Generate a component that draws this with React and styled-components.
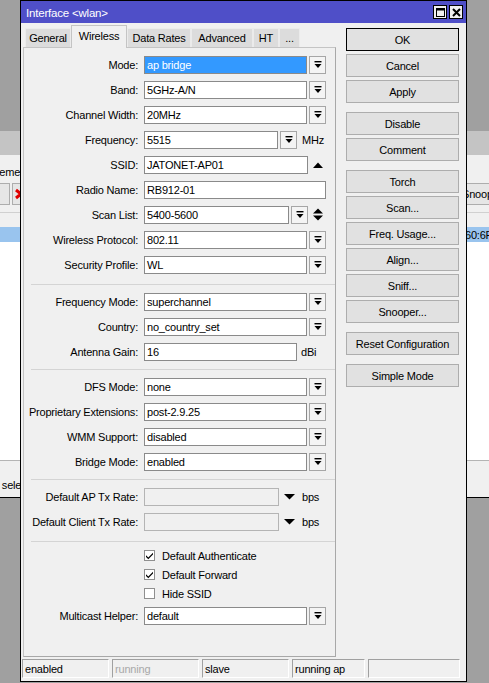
import React from "react";
import styled, { createGlobalStyle } from "styled-components";

const GlobalStyle = createGlobalStyle`
  html, body { margin: 0; padding: 0; }
  body {
    font-family: "Liberation Sans", Arial, sans-serif;
    font-size: 11px;
    letter-spacing: -0.2px;
    color: #000;
  }
`;

const Desktop = styled.div`
  position: relative;
  width: 489px;
  height: 683px;
  overflow: hidden;
  background: #a0a0a0;
`;

/* window lying behind the dialog */
const BackWindow = styled.div`
  position: absolute;
  left: -60px;
  top: 131px;
  width: 620px;
  height: 367px;
  box-sizing: border-box;
  background: #f0f0f0;
  border-bottom: 1px solid #000;
  display: flex;
  flex-direction: column;
`;

const BackTitle = styled.div`
  height: 24px;
  background: #c4c4c4;
`;

const BackTabs = styled.div`
  height: 26px;
  box-sizing: border-box;
  display: flex;
  align-items: flex-end;
  padding: 0 0 3px 40px;
`;

const BackToolbar = styled.div`
  height: 32px;
  box-sizing: border-box;
  display: flex;
  align-items: flex-start;
  gap: 2px;
  padding: 2px 0 0 50px;
  border-bottom: 1px solid #d0d0d0;
`;

const BackTool = styled.div`
  height: 22px;
  min-width: 20px;
  padding: 0 ${(p) => (p.$icon ? 1 : 3)}px;
  box-sizing: border-box;
  border: 1px solid #adadad;
  background: #e6e6e6;
  display: flex;
  align-items: center;
  margin-left: ${(p) => p.$push || 0}px;
`;

const BackHeader = styled.div`
  height: 14px;
  background: #f0f0f0;
`;

const BackList = styled.div`
  flex: 1;
  background: #fff;
`;

const BackRow = styled.div`
  height: 15px;
  display: flex;
  align-items: center;
  background: ${(p) => (p.$selected ? "#99c4ee" : "transparent")};
  padding-left: 525px;
`;

const BackStatus = styled.div`
  height: 37px;
  box-sizing: border-box;
  border-top: 1px solid #b4b4b4;
  display: flex;
  align-items: flex-end;
  padding: 0 0 6px 18px;
`;

/* dialog */
const Dialog = styled.div`
  position: absolute;
  left: 20px;
  top: 0;
  width: 447px;
  height: 682px;
  box-sizing: border-box;
  border: 1px solid #000;
  background: #f0f0f0;
  display: flex;
  flex-direction: column;
`;

const TitleBar = styled.div`
  height: 22px;
  background: #4f4fc8;
  display: flex;
  align-items: center;
  padding: 0 3px 0 5px;
  color: #fff;
  font-size: 11.5px;
`;

const TitleText = styled.span`
  flex: 1;
  padding-top: 1px;
`;

const TitleButton = styled.div`
  width: 14px;
  height: 14px;
  margin-left: 2px;
  box-sizing: border-box;
  border: 1px solid #000;
  background: #f0f0f0;
  display: flex;
  align-items: center;
  justify-content: center;
`;

const Main = styled.div`
  flex: 1;
  display: flex;
  padding: 0 7px 0 2px;
  min-height: 0;
`;

const Left = styled.div`
  width: 313px;
  display: flex;
  flex-direction: column;
`;

const Tabs = styled.div`
  height: 24px;
  display: flex;
  align-items: flex-end;
  padding-left: 2px;
`;

const Tab = styled.div`
  width: ${(p) => p.$w}px;
  height: ${(p) => (p.$active ? 23 : 19)}px;
  box-sizing: border-box;
  display: flex;
  align-items: center;
  justify-content: center;
  padding-bottom: ${(p) => (p.$active ? 2 : 0)}px;
  background: ${(p) => (p.$active ? "#f0f0f0" : "#dcdcdc")};
  border: 1px solid ${(p) => (p.$active ? "#c4c4c4" : "#ebebeb")};
  border-bottom: none;
  margin-bottom: ${(p) => (p.$active ? -1 : 0)}px;
  position: relative;
  z-index: ${(p) => (p.$active ? 1 : 0)};
`;

const Panel = styled.div`
  flex: 1;
  border: 1px solid #a8a8a8;
  border-top-color: #c4c4c4;
  border-left-color: #c4c4c4;
  padding-top: 4px;
`;

const Row = styled.div`
  height: 25px;
  display: flex;
  align-items: center;
`;

const Label = styled.div`
  width: 114px;
  text-align: right;
  margin-right: 6px;
  white-space: nowrap;
`;

const Field = styled.div`
  width: ${(p) => p.$w}px;
  height: 18px;
  box-sizing: border-box;
  border: 1px solid ${(p) => (p.$disabled ? "#b4b4b4" : "#8a8a8a")};
  background: ${(p) => (p.$selected ? "#3399ff" : p.$disabled ? "#f0f0f0" : "#fff")};
  color: ${(p) => (p.$selected ? "#fff" : "#000")};
  display: flex;
  align-items: center;
  padding-left: 2px;
  white-space: nowrap;
`;

const DropButton = styled.div`
  width: 17px;
  height: 18px;
  box-sizing: border-box;
  margin-left: 2px;
  border: 1px solid #a6a6a6;
  background: #f4f4f4;
  display: flex;
  align-items: center;
  justify-content: center;
`;

const Glyph = styled.div`
  width: ${(p) => p.$w || 18}px;
  display: flex;
  align-items: center;
  justify-content: center;
`;

const Unit = styled.div`
  margin-left: ${(p) => p.$ml || 4}px;
`;

const Separator = styled.div`
  height: 1px;
  background: #d4d4d4;
  margin: ${(p) => p.$mt}px 0 ${(p) => p.$mb}px 7px;
`;

const CheckRow = styled.div`
  height: 19px;
  display: flex;
  align-items: center;
  padding-left: 120px;
`;

const Box = styled.div`
  width: 11px;
  height: 11px;
  box-sizing: border-box;
  border: 1px solid #8f8f8f;
  background: #fff;
  margin-right: 7px;
  display: flex;
  align-items: center;
  justify-content: center;
`;

const Buttons = styled.div`
  width: 113px;
  margin-left: 10px;
  padding-top: 5px;
  display: flex;
  flex-direction: column;
`;

const Button = styled.div`
  height: 23px;
  box-sizing: border-box;
  border: 1px solid ${(p) => (p.$default ? "#000" : "#adadad")};
  background: #e1e1e1;
  display: flex;
  align-items: center;
  justify-content: center;
  margin-top: ${(p) => (p.$group ? 9 : 3)}px;
  &:first-child { margin-top: 0; }
`;

const StatusBar = styled.div`
  height: 24px;
  display: flex;
  gap: 3px;
  padding: 2px 0 0 1px;
  box-sizing: border-box;
`;

const Cell = styled.div`
  width: ${(p) => p.$w}px;
  height: 19px;
  box-sizing: border-box;
  border: 1px solid #a0a0a0;
  border-right-color: #fff;
  border-bottom-color: #fff;
  padding-left: 2px;
  display: flex;
  align-items: center;
  color: ${(p) => (p.$dim ? "#a8a8a8" : "#000")};
`;

const DropIcon = () => (
  <svg width="8" height="8" viewBox="0 0 8 8">
    <rect x="0.5" y="0" width="7" height="1.4" fill="#000" />
    <polygon points="0.5,3 7.5,3 4,7" fill="#000" />
  </svg>
);

const UpIcon = () => (
  <svg width="10" height="6" viewBox="0 0 10 6">
    <polygon points="0,6 10,6 5,0.5" fill="#000" />
  </svg>
);

const DownIcon = () => (
  <svg width="11" height="6" viewBox="0 0 11 6">
    <polygon points="0,0 11,0 5.5,5.5" fill="#000" />
  </svg>
);

const UpDownIcon = () => (
  <svg width="10" height="13" viewBox="0 0 10 13">
    <polygon points="0,5.5 10,5.5 5,0.5" fill="#000" />
    <polygon points="0,7.5 10,7.5 5,12.5" fill="#000" />
  </svg>
);

const CheckIcon = () => (
  <svg width="9" height="9" viewBox="0 0 9 9">
    <path d="M1 4.2 L3.3 6.6 L8 1.8 L8 3.6 L3.3 8.3 L1 6 Z" fill="#000" />
  </svg>
);

const CloseIcon = () => (
  <svg width="9" height="9" viewBox="0 0 9 9">
    <path d="M1 1 L8 8 M8 1 L1 8" stroke="#000" strokeWidth="2" />
  </svg>
);

const MaxIcon = () => (
  <svg width="9" height="9" viewBox="0 0 9 9">
    <rect x="0.5" y="0.5" width="8" height="8" fill="none" stroke="#000" />
    <rect x="0.5" y="0.5" width="8" height="2" fill="#000" />
  </svg>
);

const RedX = () => (
  <svg width="14" height="12" viewBox="0 0 14 12">
    <path d="M2 2 L12 10 M12 2 L2 10" stroke="#e00000" strokeWidth="3" />
  </svg>
);

const SelectRow = ({ label, value, selected }) => (
  <Row>
    <Label>{label}</Label>
    <Field $w={163} $selected={selected}>{value}</Field>
    <DropButton><DropIcon /></DropButton>
  </Row>
);

const RateRow = ({ label }) => (
  <Row>
    <Label>{label}</Label>
    <Field $w={135} $disabled />
    <Glyph $w={20}><DownIcon /></Glyph>
    <Unit $ml={3}>bps</Unit>
  </Row>
);

const tabs = [
  { t: "General", w: 46 },
  { t: "Wireless", w: 56, a: true },
  { t: "Data Rates", w: 64 },
  { t: "Advanced", w: 62 },
  { t: "HT", w: 26 },
  { t: "...", w: 21 },
];

const buttons = [
  { t: "OK", d: true },
  { t: "Cancel" },
  { t: "Apply" },
  { t: "Disable", g: true },
  { t: "Comment" },
  { t: "Torch", g: true },
  { t: "Scan..." },
  { t: "Freq. Usage..." },
  { t: "Align..." },
  { t: "Sniff..." },
  { t: "Snooper..." },
  { t: "Reset Configuration", g: true },
  { t: "Simple Mode", g: true },
];

export default function App() {
  return (
    <Desktop>
      <GlobalStyle />
      <BackWindow>
        <BackTitle />
        <BackTabs>Nstreme</BackTabs>
        <BackToolbar>
          <BackTool />
          <BackTool $icon><RedX /></BackTool>
          <BackTool $push={424}>Snooper</BackTool>
        </BackToolbar>
        <BackHeader />
        <BackList>
          <BackRow $selected>60:6F</BackRow>
        </BackList>
        <BackStatus>1 item (1 selected)</BackStatus>
      </BackWindow>

      <Dialog>
        <TitleBar>
          <TitleText>Interface &lt;wlan&gt;</TitleText>
          <TitleButton><MaxIcon /></TitleButton>
          <TitleButton><CloseIcon /></TitleButton>
        </TitleBar>
        <Main>
          <Left>
            <Tabs>
              {tabs.map((t) => (
                <Tab key={t.t} $w={t.w} $active={t.a}>{t.t}</Tab>
              ))}
            </Tabs>
            <Panel>
              <SelectRow label="Mode:" value="ap bridge" selected />
              <SelectRow label="Band:" value="5GHz-A/N" />
              <SelectRow label="Channel Width:" value="20MHz" />
              <Row>
                <Label>Frequency:</Label>
                <Field $w={134}>5515</Field>
                <DropButton><DropIcon /></DropButton>
                <Unit $ml={5}>MHz</Unit>
              </Row>
              <Row>
                <Label>SSID:</Label>
                <Field $w={164}>JATONET-AP01</Field>
                <Glyph $w={19}><UpIcon /></Glyph>
              </Row>
              <Row>
                <Label>Radio Name:</Label>
                <Field $w={182}>RB912-01</Field>
              </Row>
              <Row>
                <Label>Scan List:</Label>
                <Field $w={145}>5400-5600</Field>
                <DropButton><DropIcon /></DropButton>
                <Glyph $w={19}><UpDownIcon /></Glyph>
              </Row>
              <SelectRow label="Wireless Protocol:" value="802.11" />
              <SelectRow label="Security Profile:" value="WL" />
              <Separator $mt={7} $mb={4} />
              <SelectRow label="Frequency Mode:" value="superchannel" />
              <SelectRow label="Country:" value="no_country_set" />
              <Row>
                <Label>Antenna Gain:</Label>
                <Field $w={153}>16</Field>
                <Unit>dBi</Unit>
              </Row>
              <Separator $mt={5} $mb={4} />
              <SelectRow label="DFS Mode:" value="none" />
              <SelectRow label="Proprietary Extensions:" value="post-2.9.25" />
              <SelectRow label="WMM Support:" value="disabled" />
              <SelectRow label="Bridge Mode:" value="enabled" />
              <Separator $mt={5} $mb={4} />
              <RateRow label="Default AP Tx Rate:" />
              <RateRow label="Default Client Tx Rate:" />
              <Separator $mt={7} $mb={4} />
              <CheckRow><Box><CheckIcon /></Box>Default Authenticate</CheckRow>
              <CheckRow><Box><CheckIcon /></Box>Default Forward</CheckRow>
              <CheckRow><Box />Hide SSID</CheckRow>
              <SelectRow label="Multicast Helper:" value="default" />
            </Panel>
          </Left>
          <Buttons>
            {buttons.map((b) => (
              <Button key={b.t} $default={b.d} $group={b.g}>{b.t}</Button>
            ))}
          </Buttons>
        </Main>
        <StatusBar>
          <Cell $w={87}>enabled</Cell>
          <Cell $w={87} $dim>running</Cell>
          <Cell $w={87}>slave</Cell>
          <Cell $w={73}>running ap</Cell>
          <Cell $w={92} />
        </StatusBar>
      </Dialog>
    </Desktop>
  );
}
